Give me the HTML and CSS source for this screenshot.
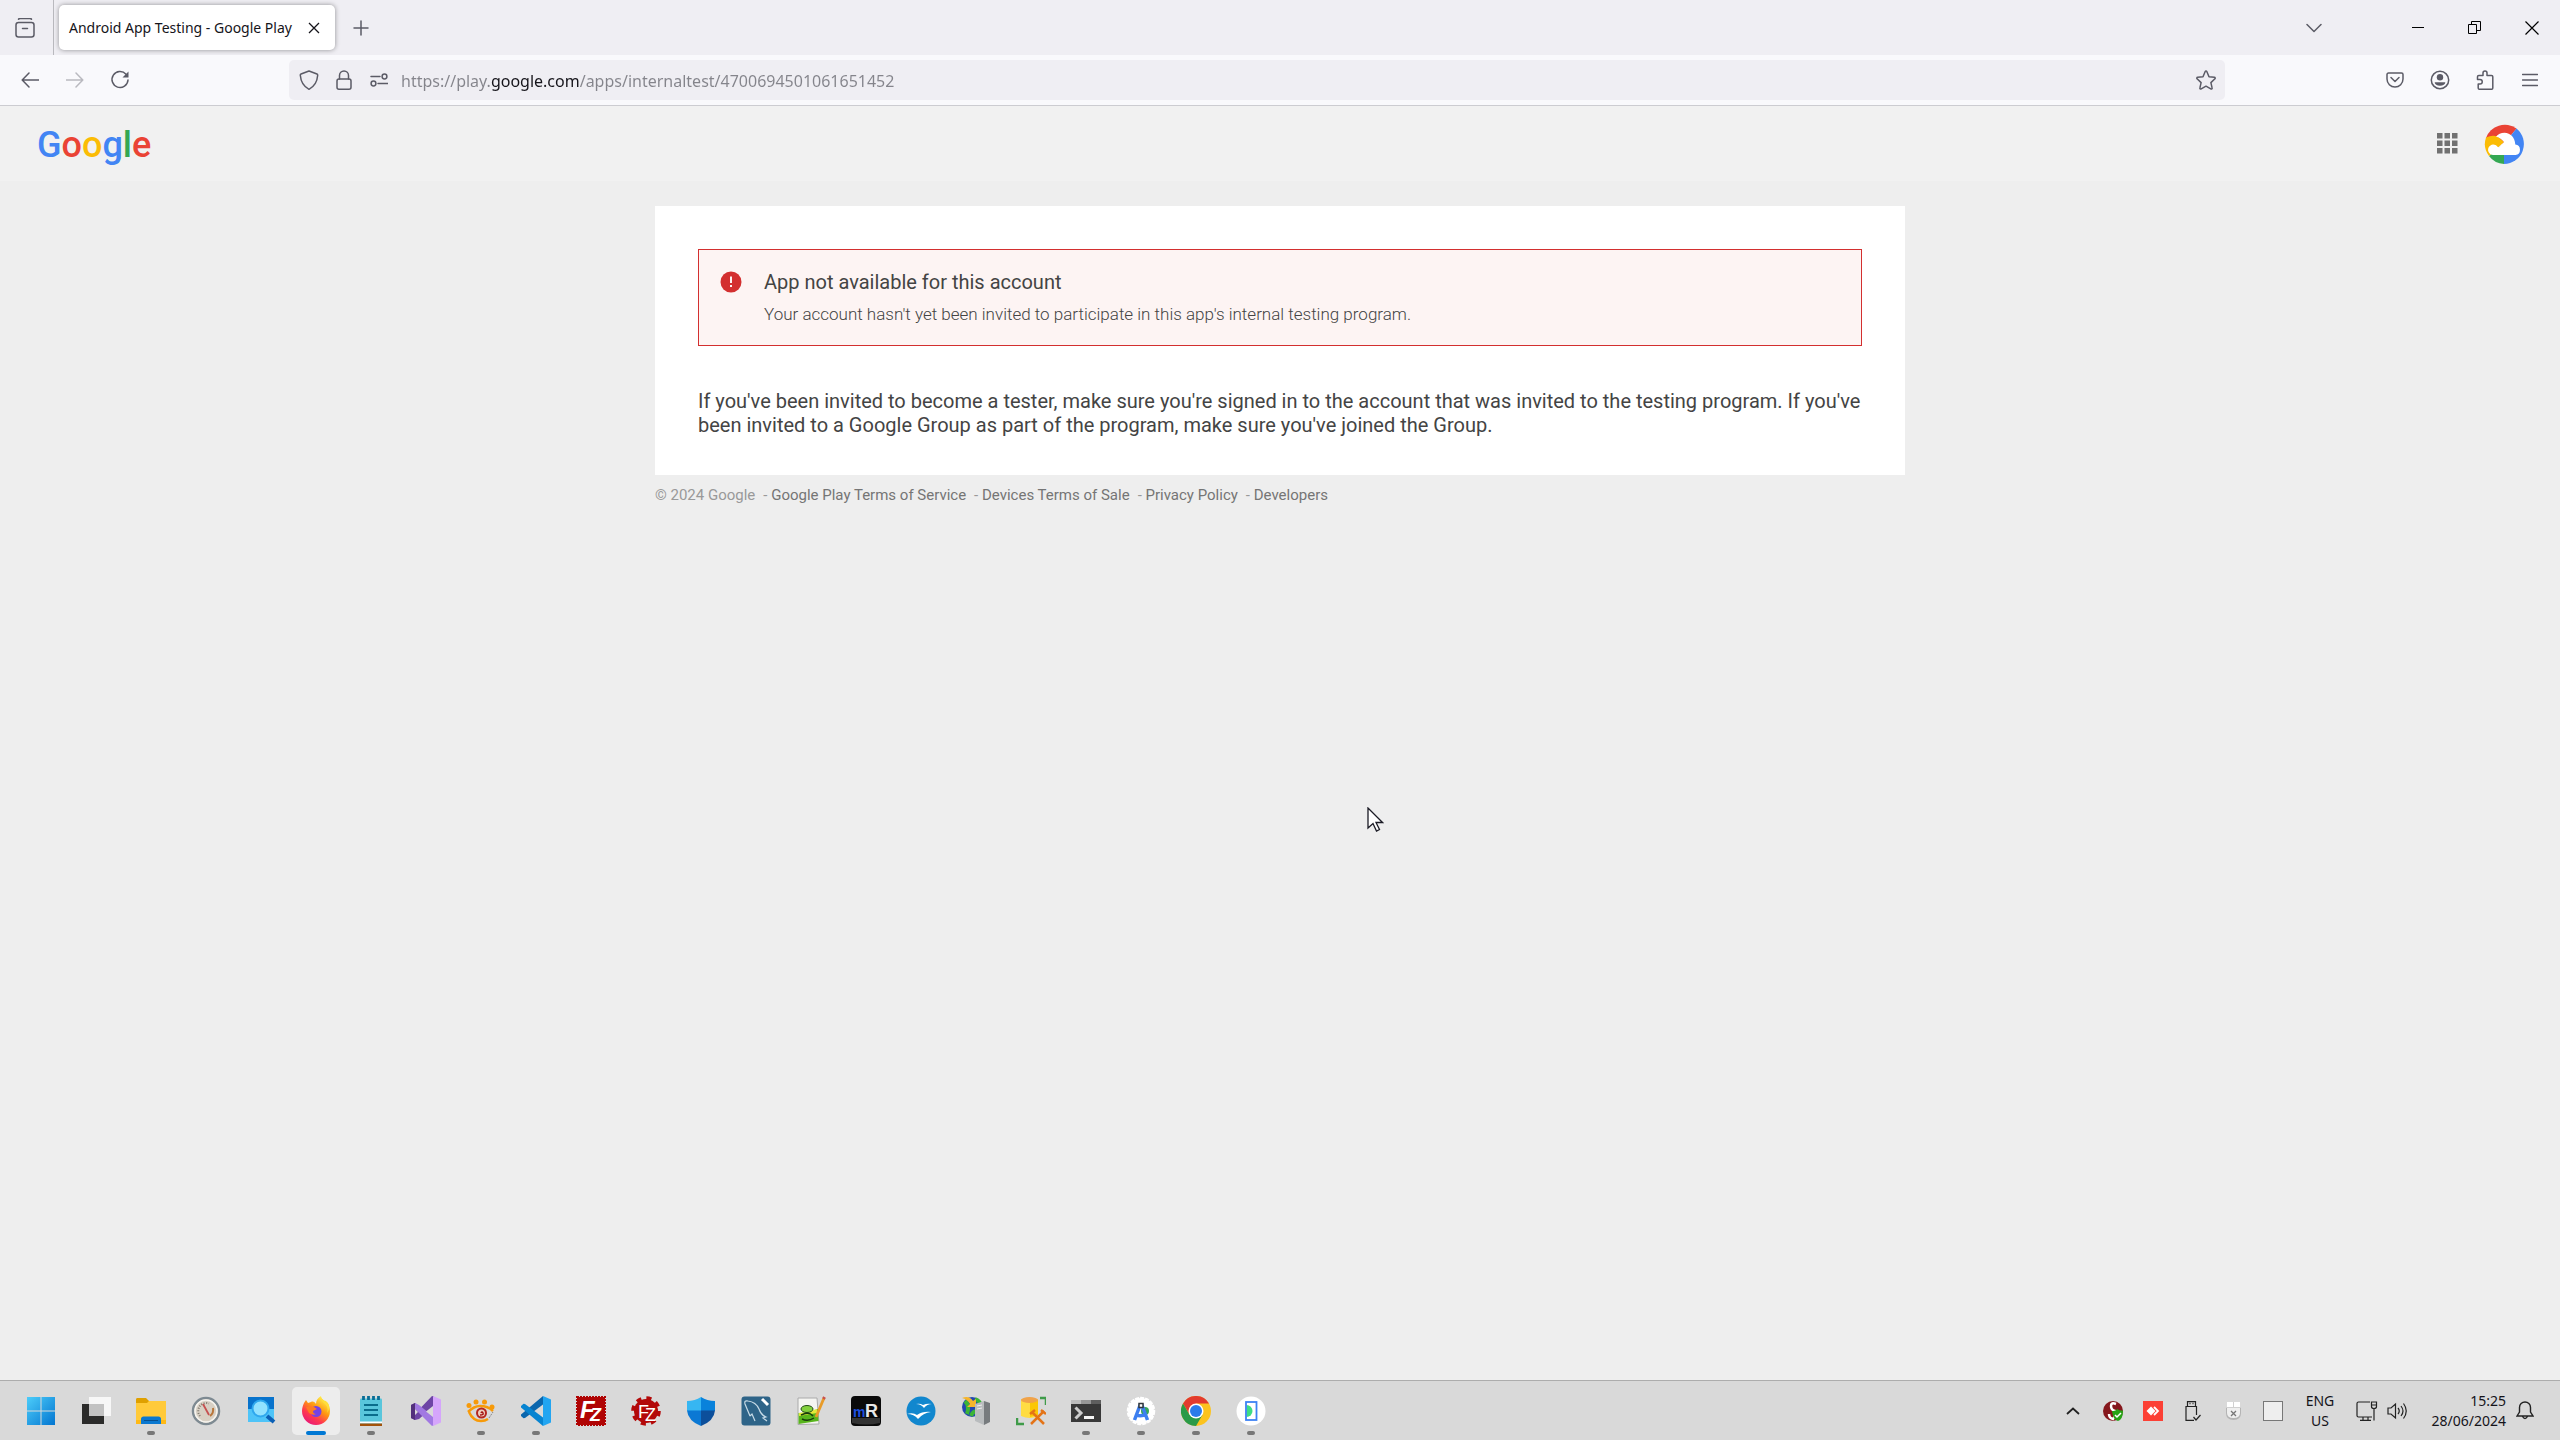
FILE: index.html
```html
<!DOCTYPE html>
<html lang="en">
<head>
    <meta charset="UTF-8">
    <meta name="viewport" content="width=device-width, initial-scale=1.0">
    <title>Android App Testing - Google Play</title>
    <link rel="stylesheet" href="styles.css">
</head>
<body>
    <!-- Browser tabs -->
    <div class="tab-strip">
        <button class="view-button" aria-label="Firefox View">
            <svg width="20" height="20" viewBox="0 0 20 20" class="line"><path d="M3.500 1.200C4 .5 4.500 .5 5 .5h10c.5 0 1 0 1.500.7"/><rect x="1" y="4.500" width="18" height="14.500" rx="2.500"/><path d="M7.500 10.500h5"/></svg>
        </button>
        <div class="tab">
            <span class="tab-title">Android App Testing - Google Play</span>
            <button class="tab-close" aria-label="Close tab">
                <svg width="12" height="12" viewBox="0 0 12 12"><path d="M1 1l10 10M11 1L1 11" stroke="#15141a" stroke-width="1.300"/></svg>
            </button>
        </div>
        <button class="tool-button" aria-label="New tab">
            <svg width="16" height="16" viewBox="0 0 16 16" class="line"><path d="M8 1v14M1 8h14"/></svg>
        </button>
        <div class="window-buttons">
            <button class="tool-button list-tabs" aria-label="List all tabs">
                <svg width="16" height="10" viewBox="0 0 16 10" class="line"><path d="M1 1.500l7 7 7-7"/></svg>
            </button>
            <button class="window-button" aria-label="Minimize">
                <svg width="12" height="12" viewBox="0 0 12 12"><path d="M0 5.500h12" stroke="#000"/></svg>
            </button>
            <button class="window-button" aria-label="Restore">
                <svg width="13" height="13" viewBox="0 0 13 13" fill="none" stroke="#000"><path d="M.5 3.500h8v9h-8zM3.500 3V.5h9v9H9"/></svg>
            </button>
            <button class="window-button" aria-label="Close">
                <svg width="14" height="14" viewBox="0 0 14 14"><path d="M.5 .5l13 13M13.500 .5l-13 13" stroke="#000" stroke-width="1.200"/></svg>
            </button>
        </div>
    </div>

    <!-- Address bar -->
    <div class="nav-bar">
        <div class="nav-group">
            <button class="tool-button" aria-label="Back">
                <svg width="18" height="16" viewBox="0 0 18 16" class="line"><path d="M8 1L1.200 8 8 15M1.500 8H18"/></svg>
            </button>
            <button class="tool-button disabled" aria-label="Forward" disabled>
                <svg width="18" height="16" viewBox="0 0 18 16" class="line"><path d="M10 1l6.800 7-6.800 7M16.500 8H0"/></svg>
            </button>
            <button class="tool-button" aria-label="Reload">
                <svg width="20" height="20" viewBox="0 0 20 20" class="line"><path d="M16 4.200A8 8 0 1 0 18 10"/><path d="M18.500 1.500v6h-6z" fill="#5b5b66" stroke="none"/></svg>
            </button>
        </div>
        <div class="url-bar">
            <button class="url-button" aria-label="Tracking protection">
                <svg width="20" height="20" viewBox="0 0 20 20" class="line"><path d="M10 1L2 4c-.5.2-.8.7-.7 1.300C1.800 11.500 4.500 16.500 10 19.300c5.500-2.800 8.200-7.800 8.700-14 0-.6-.2-1.100-.7-1.300z"/></svg>
            </button>
            <button class="url-button" aria-label="Site security">
                <svg width="16" height="20" viewBox="0 0 16 20" class="line"><rect x="1" y="9" width="14" height="10.200" rx="2"/><path d="M3.500 9V5.500a4.500 4.500 0 0 1 9 0V9"/></svg>
            </button>
            <button class="url-button" aria-label="Permissions">
                <svg width="18" height="14" viewBox="0 0 18 14" class="line"><path d="M1 3.500h9M8 10.500h10"/><circle cx="14.500" cy="3.500" r="2.400"/><circle cx="3.500" cy="10.500" r="2.400"/></svg>
            </button>
            <input class="url-input" type="text" aria-label="Address" value="https://play.google.com/apps/internaltest/4700694501061651452">
            <button class="url-button" aria-label="Bookmark this page">
                <svg width="20" height="20" viewBox="0 0 20 20" class="line"><path d="M9.200 1.500c.3-.7 1.300-.7 1.600 0L13 6.800l5.400.5c.8.1 1.100 1 .5 1.500l-4 3.800 1.200 5.300c.2.800-.6 1.400-1.300 1L10 16.200l-4.800 2.700c-.7.4-1.500-.2-1.300-1l1.200-5.300-4-3.800c-.6-.5-.3-1.400.5-1.500L7 6.800z"/></svg>
            </button>
        </div>
        <div class="nav-group">
            <button class="tool-button" aria-label="Save to Pocket">
                <svg width="18" height="16" viewBox="0 0 18 16" class="line"><path d="M2.500 1h13C16.400 1 17 1.600 17 2.500V7a8 8 0 0 1-16 0V2.500C1 1.600 1.600 1 2.500 1z"/><path d="M5 5.500l4 4 4-4"/></svg>
            </button>
            <button class="tool-button" aria-label="Account">
                <svg width="20" height="20" viewBox="0 0 20 20" class="line"><circle cx="10" cy="10" r="8.700"/><g fill="#5b5b66" stroke="none"><circle cx="10" cy="7.300" r="3.200"/><path d="M4.700 12.200h10.600c0 2.300-2.300 3.500-5.300 3.500s-5.300-1.200-5.300-3.500z"/></g></svg>
            </button>
            <button class="tool-button" aria-label="Extensions">
                <svg width="18" height="20" viewBox="0 0 18 20" class="line"><path d="M7 5.500V3a2 2 0 0 1 4 0v2.500h4.500c.7 0 1.300.6 1.300 1.300v11.200c0 .7-.6 1.300-1.300 1.300h-12c-.7 0-1.300-.6-1.300-1.300V14H4a2 2 0 0 0 0-4.500H1.500V6.800c0-.7.6-1.300 1.300-1.300z"/></svg>
            </button>
            <button class="tool-button" aria-label="Menu">
                <svg width="16" height="14" viewBox="0 0 16 14" class="line"><path d="M.5 1.500h15M.5 7h15M.5 12.500h15"/></svg>
            </button>
        </div>
    </div>

    <!-- Google Play page -->
    <div class="page">
        <header class="header">
            <a href="#" class="logo" aria-label="Google"><span class="blue">G</span><span class="red">o</span><span class="yellow">o</span><span class="blue">g</span><span class="green">l</span><span class="red">e</span></a>
            <button class="plain-button" aria-label="Google apps">
                <svg width="21" height="21" viewBox="0 0 21 21" fill="#717171"><path d="M0 0h5.500v5.500H0zM7.500 0H13v5.500H7.500zM15 0h5.500v5.500H15zM0 7.500h5.500V13H0zM7.500 7.500H13V13H7.500zM15 7.500h5.500V13H15zM0 15h5.500v5.500H0zM7.500 15H13v5.500H7.500zM15 15h5.500v5.500H15z"/></svg>
            </button>
            <button class="plain-button avatar" aria-label="Google Account">
                <svg width="40" height="40" viewBox="0 0 40 40">
                    <path fill="#ea4335" d="M20 20L2 14A20 20 0 0 1 32.500 4.500z"/>
                    <path fill="#4285f4" d="M20 20L32.500 4.500A20 20 0 0 1 20 40z"/>
                    <path fill="#34a853" d="M20 20v20A20 20 0 0 1 5 32z"/>
                    <path fill="#fbbc04" d="M5 32A20 20 0 0 1 2 13.500Q9 10.500 14 13l6 5z"/>
                    <path fill="#fff" d="M9 31a5.200 5.200 0 1 1 4.500-8.200l1.500.7 5-5.500c-2.500-3-5-4.800-8-5.200 2-2.600 5-4 8.500-4 6 0 10.500 5 10.800 11.700A5.300 5.300 0 0 1 31.500 31z"/>
                </svg>
            </button>
        </header>

        <main class="content">
            <div class="card">
                <div class="alert" role="alert">
                    <svg width="22" height="22" viewBox="0 0 22 22"><circle cx="11" cy="11" r="10.500" fill="#d32f2f"/><path d="M11 5.500v6.500M11 14v2" stroke="#fdf3f2" stroke-width="2"/></svg>
                    <div class="alert-text">
                        <h1>App not available for this account</h1>
                        <p>Your account hasn't yet been invited to participate in this app's internal testing program.</p>
                    </div>
                </div>
                <p class="message">If you've been invited to become a tester, make sure you're signed in to the account that was invited to the testing program. If you've been invited to a Google Group as part of the program, make sure you've joined the Group.</p>
            </div>
            <footer class="footer">
                <span>© 2024 Google</span>
                <span>- <a href="#">Google Play Terms of Service</a></span>
                <span>- <a href="#">Devices Terms of Sale</a></span>
                <span>- <a href="#">Privacy Policy</a></span>
                <span>- <a href="#">Developers</a></span>
            </footer>
        </main>
    </div>

    <!-- Windows taskbar -->
    <div class="taskbar">
        <div class="apps">
            <button class="app" aria-label="Start">
                <svg width="30" height="30" viewBox="0 0 30 30"><defs><linearGradient id="win" x1="0" y1="0" x2="30" y2="30" gradientUnits="userSpaceOnUse"><stop offset="0" stop-color="#4fd0fb"/><stop offset="1" stop-color="#0072cf"/></linearGradient></defs><path fill="url(#win)" d="M1 1h13.500v13.500H1zM15.500 1H29v13.500H15.500zM1 15.500h13.500V29H1zM15.500 15.500H29V29H15.500z"/></svg>
            </button>
            <button class="app" aria-label="Task view">
                <svg width="30" height="30" viewBox="0 0 30 30"><path fill="#2b2b2a" d="M1 8h22v20H1z"/><path fill="#f7f7f7" d="M8 1h22v19H8z"/><path fill="#c2c2c2" d="M8 8h15v12H8z"/></svg>
            </button>
            <button class="app running" aria-label="File Explorer">
                <svg width="30" height="30" viewBox="0 0 30 30"><path fill="#dfa000" d="M0 3.500C0 2.500.7 2 1.500 2H10l3 3v4H0z"/><path fill="#ffca3a" d="M0 7h11l2-2h17v22.500H0z"/><path fill="#ffb915" d="M0 24h30v4H0z"/><path fill="#0a78d0" d="M5 28v-5c0-1.500 1-2.500 2.500-2.500h15c1.500 0 2.500 1 2.500 2.500v5z"/><path stroke="#064f8f" d="M8 24.500h14"/></svg>
            </button>
            <button class="app" aria-label="Gauge">
                <svg width="30" height="30" viewBox="0 0 30 30"><circle cx="15" cy="15" r="13" fill="#d8d0c4" stroke="#7e8a92" stroke-width="2.500"/><circle cx="15" cy="15" r="11" fill="none" stroke="#f6f4ef" stroke-width="1.500"/><path d="M9 20a8 8 0 0 1 9-12.500" fill="none" stroke="#807a70" stroke-width="2" stroke-dasharray="1 1.500"/><path d="M22 12q1 5-3 8" fill="none" stroke="#b8763b" stroke-width="2"/><path d="M12 8l6 11" stroke="#c65050" stroke-width="1.800"/></svg>
            </button>
            <button class="app" aria-label="Search tool">
                <svg width="30" height="30" viewBox="0 0 30 30"><path fill="#0873cc" d="M2 1h26v13H2z"/><path fill="#4ec4f8" d="M2 13h26v13H2z"/><path d="M21 20l7 6" stroke="#0b5fb5" stroke-width="4"/><circle cx="14.500" cy="12.500" r="8" fill="#92e2ff" stroke="#2fa8ee" stroke-width="2"/></svg>
            </button>
            <button class="app active" aria-label="Firefox">
                <svg width="30" height="30" viewBox="0 0 30 30"><defs><linearGradient id="fox" x1="24" y1="2" x2="6" y2="28" gradientUnits="userSpaceOnUse"><stop offset="0" stop-color="#fff44f"/><stop offset=".4" stop-color="#ff980e"/><stop offset=".7" stop-color="#ff3750"/><stop offset="1" stop-color="#e5177c"/></linearGradient></defs><path fill="url(#fox)" d="M3 7l2-3 2 3 3-1c2-1 4 0 5 2 0-4 2-6 5-8 0 3 3 4 5 7l1-1c2 3 3 6 3 9a14 14 0 0 1-28 0c0-3 1-6 2-8z"/><circle cx="15" cy="15.500" r="5.500" fill="#7542e5"/><path fill="#ff7a22" d="M5 11q5-1 8 0l3 2-4 2q0 3 3 3-3 2-7-1z"/><path fill="#ffde3b" d="M20 1q0 4 4 7t2 9q5-7-1-12-4-1-5-4z"/></svg>
            </button>
            <button class="app running" aria-label="Notepad">
                <svg width="30" height="30" viewBox="0 0 30 30"><rect x="4" y="2.500" width="22" height="26" rx="1" fill="#59c6dc"/><path fill="#fff" d="M4 25.500h22v2H4z"/><path fill="#a3530b" d="M4 27.500h22V30H4z"/><path d="M8 9h14M8 14h14M8 19h14" stroke="#0a6d8c" stroke-width="1.800"/><path d="M7.500 0v4M12.500 0v4M17.500 0v4M22.500 0v4" stroke="#086d96" stroke-width="2.800"/></svg>
            </button>
            <button class="app" aria-label="Visual Studio">
                <svg width="30" height="30" viewBox="0 0 30 30"><path fill="#6d45a5" d="M0 9l4-2 6 4.500L21 0l2 .5V10L8 23l-4 1-4-2z"/><path fill="#52307c" d="M0 9l4-2v17l-4-2z"/><path fill="#a178e2" d="M8 9l15 12v8l-2 1L4 13V7z"/><path fill="#d5a5fb" d="M22 0l8 3.500v23L22 30z"/><path fill="#d9d9d9" d="M4 13l3 3-3 3zM22 10v11l-7-5.500z"/></svg>
            </button>
            <button class="app running" aria-label="XnView">
                <svg width="30" height="30" viewBox="0 0 30 30"><g fill="#f79a09"><circle cx="3" cy="9.500" r="2.500"/><circle cx="10" cy="6" r="2.500"/><circle cx="18.500" cy="6" r="2.500"/><circle cx="26" cy="11" r="2.500"/></g><path d="M2 16q6-6 12-6 8 0 13 5M3 16q4 9 12 9 4 0 7-2" fill="none" stroke="#f79a09" stroke-width="2.500"/><circle cx="15.500" cy="17" r="4.500" fill="#efcebd" stroke="#b5261f" stroke-width="2"/><path d="M15 17q1-2 2 0t-3 2" fill="none" stroke="#a11414" stroke-width="1.500"/><path d="M23 22l4-6" stroke="#888" stroke-dasharray="2 1"/></svg>
            </button>
            <button class="app running" aria-label="Visual Studio Code">
                <svg width="30" height="30" viewBox="0 0 30 30"><path fill="#0a66ad" d="M22 0v8.500L4 22l-1.500.2L0 20v-1.500z"/><path fill="#0784d1" d="M22 30v-8.500L4 8l-1.500-.2L0 10v1.500z"/><path fill="#22a5f1" d="M22 0l8 3.500v23L22 30z"/></svg>
            </button>
            <button class="app" aria-label="FileZilla">
                <svg width="30" height="30" viewBox="0 0 30 30"><rect x="1" y="1" width="28" height="28" fill="#b00404" stroke="#b00404" stroke-width="2" stroke-dasharray="2 1"/><text x="4" y="22" class="glyph-big">F</text><text x="14" y="25" class="glyph-small">Z</text></svg>
            </button>
            <button class="app" aria-label="FileZilla Server">
                <svg width="30" height="30" viewBox="0 0 30 30"><circle cx="15" cy="15" r="12" fill="#b30909"/><circle cx="15" cy="15" r="12.800" fill="none" stroke="#b30909" stroke-width="4" stroke-dasharray="5 5.050"/><text x="7" y="22" class="glyph-mid">F</text><text x="14" y="25" class="glyph-mid">Z</text></svg>
            </button>
            <button class="app" aria-label="Windows Security">
                <svg width="30" height="30" viewBox="0 0 30 30"><path fill="#36b6f2" d="M15 1v14H1V5q8 0 14-4z"/><path fill="#0982db" d="M15 1v14h14V5q-8 0-14-4z"/><path fill="#0b78d4" d="M1 14.500h14V30Q2 25 1 14.500z"/><path fill="#0c4f9b" d="M29 14.500H15V30q13-5 14-15.500z"/></svg>
            </button>
            <button class="app" aria-label="MySQL Workbench">
                <svg width="30" height="30" viewBox="0 0 30 30"><rect x=".5" y=".5" width="29" height="29" rx="3" fill="#2e6488"/><path d="M9 20L4 8q-1-4 3-3 8 1 11 8 2 6 7 8l-3 1 4 3M9 20l2-2 3 7" fill="none" stroke="#c7dbe7" stroke-width="1.200"/><path d="M21 3l6 6" stroke="#fff" stroke-width="3"/></svg>
            </button>
            <button class="app" aria-label="Notepad++">
                <svg width="30" height="30" viewBox="0 0 30 30"><path fill="#f5f5f2" stroke="#aaa" d="M2 2h19l2 26-21 .5z"/><path fill="#58b51c" d="M2.500 17q9 0 19.500-4l.5 12-20 3z"/><path fill="#e2e93a" d="M3 17q10-1 18-4v4l-18 3z"/><ellipse cx="11" cy="13" rx="6" ry="3.500" fill="#83d13d" stroke="#244b16"/><path d="M5 19q8-4 12 1M6 23q6 3 12-1" fill="none" stroke="#183d0d" stroke-width="1.500"/><path d="M28 2L20 21" stroke="#e89b28" stroke-width="2.800"/><path d="M28.500 1l-1 2" stroke="#c9524c" stroke-width="3"/></svg>
            </button>
            <button class="app" aria-label="mRemoteNG">
                <svg width="30" height="30" viewBox="0 0 30 30"><rect width="30" height="30" rx="4" fill="#0a0a0a"/><path fill="#333" d="M1 22h28v5q-14 3-28 0z"/><text x="2" y="21" class="glyph-m">m</text><text x="14" y="21" class="glyph-r">R</text></svg>
            </button>
            <button class="app" aria-label="OpenOffice">
                <svg width="30" height="30" viewBox="0 0 30 30"><circle cx="15" cy="15" r="14.500" fill="#1187ce"/><path fill="#fff" d="M10 8q4-1 7 1 4-2 9-1-5 0-8 4-3-4-8-4zM1 18q6-2 10 1 6-4 14-3-8 1-13 7-4-5-11-5z"/></svg>
            </button>
            <button class="app" aria-label="WinSCP">
                <svg width="30" height="30" viewBox="0 0 30 30"><circle cx="11" cy="11" r="10" fill="#2347b0"/><path d="M4 5q5 5 2 13M10 20q2-5 6-5M14 3q5 2 6 6" fill="none" stroke="#3bb536" stroke-width="4"/><path fill="#f6b52b" d="M1 2q7-3 11 3l3-2v8H6l3-3Q6 3 1 2z"/><path fill="#b9bcbe" d="M14 8l9-3v24l-9-4z"/><path fill="#777b7e" d="M23 5l6 2v19l-6 3z"/><path d="M16 10l5-1M16 13l5-1" stroke="#eee"/></svg>
            </button>
            <button class="app" aria-label="Database tools">
                <svg width="30" height="30" viewBox="0 0 30 30"><path fill="#ffdc43" d="M5 3h17v17q-8 4-17 0z"/><path fill="#fbc706" d="M14 4h8v15l-8 2z"/><ellipse cx="13.500" cy="4" rx="8.500" ry="3" fill="#f0a34a"/><path d="M24 2h6v7M1 22v6h7" fill="none" stroke="#3f9b49" stroke-width="2.500"/><path d="M16 16l12 12M28 15L15 28" stroke="#e47418" stroke-width="2.500"/><path d="M14 18l5-4M25 14l5 4" stroke="#e47418" stroke-width="2.500"/></svg>
            </button>
            <button class="app running" aria-label="Terminal">
                <svg width="30" height="30" viewBox="0 0 30 30"><path fill="#383838" d="M0 4h30v22H0z"/><path fill="#bcbcbc" d="M0 4h10v4H0z"/><path fill="#969696" d="M10 4h10v4H10z"/><path fill="#5e5e5e" d="M20 4h10v4H20z"/><path d="M4.500 11.500L10 17l-5.500 5.500" fill="none" stroke="#ccc" stroke-width="3"/><path fill="#f4f4f4" d="M13 20h10v3H13z"/></svg>
            </button>
            <button class="app running" aria-label="Android Studio">
                <svg width="30" height="30" viewBox="0 0 30 30"><circle cx="15" cy="15" r="13" fill="#fff" stroke="#fff" stroke-width="2.500" stroke-dasharray="4 1"/><circle cx="19" cy="15" r="4" fill="#37a65b"/><path d="M14.500 8L8.500 24M15.500 8l6 16M10 19q5 2 11-1" fill="none" stroke="#3d7ff0" stroke-width="3.500"/><rect x="13" y="7.500" width="4" height="4" fill="#fff" stroke="#32373c" stroke-width="1.500"/></svg>
            </button>
            <button class="app running" aria-label="Chrome">
                <svg width="30" height="30" viewBox="0 0 30 30"><circle cx="15" cy="15" r="15" fill="#fcc31e"/><path fill="#e33b2e" d="M2 7.500a15 15 0 0 1 26 0H15l-6.500 11z"/><path fill="#2a9a48" d="M2 7.500A15 15 0 0 0 15 30l6.500-11.300L15 15l-6.500 3.700z"/><circle cx="15" cy="15" r="7.500" fill="#fff"/><circle cx="15" cy="15" r="6" fill="#2b7bea"/></svg>
            </button>
            <button class="app running" aria-label="Android Emulator">
                <svg width="30" height="30" viewBox="0 0 30 30"><circle cx="15" cy="15" r="14.500" fill="#fff"/><path fill="#3ddc84" d="M10.500 9a6 6 0 0 1 0 12z"/><rect x="10" y="6" width="10.500" height="18" fill="none" stroke="#3d82f4" stroke-width="1.800"/></svg>
            </button>
        </div>

        <div class="tray">
            <button class="tray-icon" aria-label="Show hidden icons">
                <svg width="14" height="8" viewBox="0 0 14 8" fill="none" stroke="#222" stroke-width="1.800"><path d="M1 7l6-5.500L13 7"/></svg>
            </button>
            <button class="tray-icon" aria-label="Antivirus">
                <svg width="20" height="20" viewBox="0 0 20 20"><circle cx="10" cy="10" r="10" fill="#85171c"/><path d="M13 3Q8 1 8 5t4 5-2 8q-4-1-4-5" fill="none" stroke="#fff" stroke-width="2.500"/><path fill="#27a316" d="M9 10q4 0 5-2 3 2 6 1.500 0 9-5 10.500-5-1-6-10z"/><path d="M12 14l2 2 4-4" fill="none" stroke="#fff" stroke-width="1.500"/></svg>
            </button>
            <button class="tray-icon" aria-label="AnyDesk">
                <svg width="20" height="20" viewBox="0 0 20 20"><path fill="#fc4035" d="M0 0h20v20H0z"/><path fill="#fff" d="M3.500 10L8 5.500l4.500 4.500L8 14.500z"/><path d="M11 6l4 4-4 4" fill="none" stroke="#fff" stroke-width="1.800"/></svg>
            </button>
            <button class="tray-icon" aria-label="Safely remove hardware">
                <svg width="16" height="20" viewBox="0 0 16 20" fill="none" stroke="#222" stroke-width="1.200"><path d="M2.500 5V.6h8V5M9 19.400H1V5.500h10.500V14M8.500 16l2.500 3 4.500-5"/><path d="M4.500 2.500h1M7.500 2.500h1" stroke-width="1.500"/></svg>
            </button>
            <button class="tray-icon" aria-label="Mouse">
                <svg width="15" height="20" viewBox="0 0 15 20"><path fill="#fff" d="M1 1h13v7H1z"/><path fill="#b4b4b4" d="M0 7h15v5q0 7-7.500 7T0 12z"/><path fill="#efefef" d="M1 6h13v6q0 5-6.500 5T1 12z"/><path d="M0 6.500h15M7.500 1v5" stroke="#d0d0d0"/><path d="M5 10l5 5M10 10l-5 5" stroke="#777" stroke-width="1.300"/></svg>
            </button>
            <button class="tray-icon" aria-label="Touch keyboard">
                <svg width="20" height="20" viewBox="0 0 20 20"><rect x=".5" y=".5" width="19" height="19" fill="#eee" stroke="#777"/></svg>
            </button>
            <button class="language">ENG<br>US</button>
            <button class="tray-icon narrow" aria-label="Network">
                <svg width="22" height="20" viewBox="0 0 22 20" fill="none" stroke="#222" stroke-width="1.200"><path d="M14 1H2.500Q1 1 1 2.500v12Q1 16 2.500 16H16M7 16v3M12 16v3M4 19.400h11M18 8v11.500"/><path d="M15.500 1h5v4.500q0 2-2.500 2t-2.500-2zM15.500 4h5"/></svg>
            </button>
            <button class="tray-icon narrow" aria-label="Volume">
                <svg width="20" height="18" viewBox="0 0 20 18" fill="none" stroke="#222" stroke-width="1.200"><path d="M1 6h3l4.500-4v14L4 12H1zM11 6q2.500 3 0 6M14 4q4 5 0 10M16.500 1.500q5.500 7.500 0 15"/></svg>
            </button>
            <button class="clock">15:25<br>28/06/2024</button>
            <button class="tray-icon bell" aria-label="Notifications">
                <svg width="18" height="19" viewBox="0 0 18 19" fill="none" stroke="#222" stroke-width="1.400"><path d="M1 15l2.500-4V6.500a5.500 5.500 0 0 1 11 0V11l2.500 4zM6.500 15.500q2.500 4 5 0"/></svg>
            </button>
        </div>
    </div>

    <svg class="cursor" width="17" height="26" viewBox="0 0 17 26"><path d="M1 1v20l5-4.500 3.500 7.500 3-1.500L9 15.500h6.500z" fill="#fff" stroke="#1b1b25" stroke-width="1.300"/></svg>
</body>
</html>
```
FILE: styles.css
```css
* {
    box-sizing: border-box;
}

body {
    margin: 0;
    min-height: 100vh;
    display: flex;
    flex-direction: column;
    font-family: "Noto Sans", "Open Sans", sans-serif;
    background-color: #eee;
    color: #15141a;
}

button {
    display: flex;
    align-items: center;
    justify-content: center;
    flex-shrink: 0;
    padding: 0;
    border: none;
    background: none;
    font-family: inherit;
    color: inherit;
}

svg {
    display: block;
    flex-shrink: 0;
}

.line {
    fill: none;
    stroke: #5b5b66;
    stroke-width: 1.5;
    stroke-linecap: round;
    stroke-linejoin: round;
}

/* Tabs */
.tab-strip {
    height: 55px;
    display: flex;
    align-items: center;
    background-color: #efeef3;
}

.view-button {
    width: 54px;
    height: 55px;
    padding-right: 3px;
    border-right: 1px solid #b9b9be;
}

.tab {
    width: 276px;
    height: 45px;
    margin: 0 3px 0 5px;
    padding: 0 15px 0 10px;
    display: flex;
    align-items: center;
    justify-content: space-between;
    background-color: #fff;
    border-radius: 5px;
    box-shadow: 0 0 5px rgba(0, 0, 0, 0.4);
}

.tab-title {
    font-size: 14px;
    white-space: nowrap;
}

.tool-button {
    width: 45px;
    height: 45px;
}

.disabled {
    opacity: 0.4;
}

.window-buttons {
    display: flex;
    align-items: center;
    margin-left: auto;
}

.list-tabs {
    margin-right: 53px;
}

.window-button {
    width: 57px;
    height: 55px;
}

/* Address bar */
.nav-bar {
    height: 51px;
    padding: 0 8px 0 7px;
    display: flex;
    align-items: center;
    background-color: #f9f9fc;
    border-bottom: 1px solid #ccccd1;
}

.nav-group {
    display: flex;
}

.url-bar {
    flex: 1;
    height: 40px;
    margin: 0 147px;
    padding: 0 2px;
    display: flex;
    align-items: center;
    background-color: #efeef3;
    border-radius: 5px;
}

.url-button {
    width: 35px;
    height: 40px;
}

/* The domain is darker than the rest of the address */
.url-input {
    flex: 1;
    margin-left: 5px;
    padding: 2px 0 0;
    border: none;
    outline: none;
    font-family: inherit;
    font-size: 16px;
    color: transparent;
    background: linear-gradient(to right, #84848b 90px, #15141a 90px, #15141a 179px, #84848b 179px);
    -webkit-background-clip: text;
    background-clip: text;
}

/* Page */
.page {
    flex: 1;
    font-family: Roboto, sans-serif;
}

.header {
    height: 75px;
    padding: 0 36px 0 37px;
    display: flex;
    align-items: center;
    background-color: #f1f1f1;
}

.logo {
    margin-right: auto;
    padding-top: 2px;
    font-size: 36px;
    font-weight: 500;
    text-decoration: none;
}

.blue {
    color: #4285f4;
}

.red {
    color: #ea4335;
}

.yellow {
    color: #fbbc05;
}

.green {
    color: #34a853;
}

.avatar {
    margin-left: 26px;
}

.content {
    max-width: 1250px;
    margin: 25px auto;
}

.card {
    padding: 43px 43px 38px;
    background-color: #fff;
    color: #444;
}

.alert {
    display: flex;
    gap: 22px;
    padding: 21px 21px 20px;
    background-color: #fdf4f3;
    border: 1px solid #d32f2f;
}

.alert h1 {
    margin: 0 0 10px;
    font-size: 20px;
    font-weight: 400;
    line-height: 22px;
}

.alert p {
    margin: 0;
    font-size: 17px;
    font-weight: 300;
    line-height: 22px;
}

.message {
    margin: 43px 0 0;
    font-size: 20px;
    line-height: 24px;
}

.footer {
    display: flex;
    gap: 8px;
    padding-top: 10px;
    font-size: 15px;
    line-height: 20px;
    color: #999;
}

.footer a {
    color: #757575;
    text-decoration: none;
}

/* Taskbar */
.taskbar {
    height: 60px;
    padding: 0 23px 0 17px;
    display: flex;
    align-items: center;
    justify-content: space-between;
    background-color: #d9d9d9;
    border-top: 1px solid #adadad;
}

.apps {
    display: flex;
    gap: 7px;
}

.app {
    position: relative;
    width: 48px;
    height: 48px;
    border-radius: 5px;
}

.active {
    background-color: #ededed;
}

.running::after,
.active::after {
    content: "";
    position: absolute;
    bottom: 0;
    left: 50%;
    width: 8px;
    height: 4px;
    margin-left: -4px;
    border-radius: 2px;
    background-color: #777;
}

.active::after {
    width: 20px;
    margin-left: -10px;
    background-color: #0078d4;
}

.glyph-big,
.glyph-small,
.glyph-mid,
.glyph-m,
.glyph-r {
    font-family: "Liberation Sans", sans-serif;
    font-weight: bold;
    font-style: italic;
    fill: #fff;
}

.glyph-big {
    font-size: 24px;
}

.glyph-small {
    font-size: 18px;
}

.glyph-mid {
    font-size: 18px;
    font-weight: normal;
    font-style: normal;
}

.glyph-m {
    font-size: 14px;
    font-style: normal;
    fill: #1c4fe0;
}

.glyph-r {
    font-size: 18px;
    font-style: normal;
    fill: #e8e8e8;
}

.tray {
    display: flex;
    align-items: center;
}

.tray-icon {
    width: 40px;
    height: 48px;
}

.narrow {
    width: 30px;
}

.bell {
    width: 24px;
}

.language,
.clock {
    height: 48px;
    font-size: 14px;
    line-height: 20px;
}

.language {
    width: 54px;
    margin-right: 5px;
}

.clock {
    width: 94px;
    margin-right: 7px;
    justify-content: flex-end;
    text-align: right;
}

/* Mouse pointer over the page */
.cursor {
    position: absolute;
    top: 807px;
    left: 1367px;
}
```
